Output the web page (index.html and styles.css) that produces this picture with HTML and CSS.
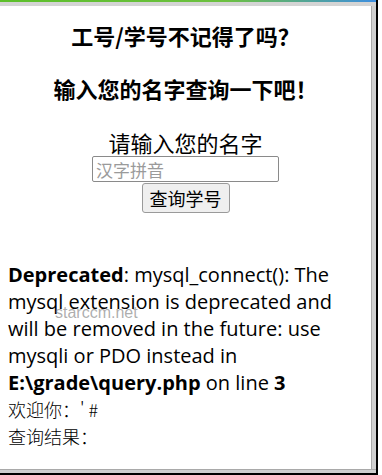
FILE: index.html
```html
<!DOCTYPE html>
<html lang="zh-CN">
<head>
    <meta charset="UTF-8">
    <title>查询学号</title>
    <link rel="stylesheet" href="styles.css">
</head>
<body>
    <div class="window">
        <div class="topbar"></div>
        <div class="toolbar"></div>
        <div class="view">
            <div class="page">
                <h3 class="title first">工号/学号不记得了吗？</h3>
                <h3 class="title">输入您的名字查询一下吧！</h3>
                <form class="query-form">
                    <div class="label">请输入您的名字</div>
                    <input type="text" name="name" placeholder="汉字拼音">
                    <button type="submit">查询学号</button>
                </form>
                <div class="result">
                    <b>Deprecated</b>: mysql_connect(): The mysql extension is deprecated and will be removed in the future: use mysqli or PDO instead in <b>E:\grade\query.php</b> on line <b>3</b><br>
                    <span class="cn">欢迎你：' #</span><br>
                    <span class="cn">查询结果：</span>
                </div>
                <span class="watermark">starccm.net</span>
            </div>
            <div class="scroll"></div>
        </div>
        <div class="status"></div>
    </div>
</body>
</html>
```

FILE: styles.css
```css
* {
    margin: 0;
    padding: 0;
    box-sizing: border-box;
}
body {
    background: #fff;
    font-family: "Open Sans", "Noto Sans CJK SC", sans-serif;
}
.window {
    width: 378px;
    height: 475px;
    display: flex;
    flex-direction: column;
    border-right: 2px solid #000;
}
.topbar {
    height: 2px;
    background: linear-gradient(90deg, #5cbf2a, #6cc040 60%, #3d8ee0);
}
.toolbar {
    height: 4px;
    background: #d4d4d4;
}
.view {
    flex: 1;
    display: flex;
}
.page {
    flex: 1;
    position: relative;
    padding: 0 8px;
    background: #fff;
    color: #000;
}
.scroll {
    width: 5px;
    background: #cfcfcf;
    border-left: 1px solid #a9a9a9;
}
.status {
    height: 6px;
    background: #cfcfcf;
    border-top: 1px solid #a9a9a9;
    border-bottom: 2px solid #000;
}
.title {
    font-family: "Noto Sans CJK SC", sans-serif;
    font-size: 22px;
    font-weight: bold;
    line-height: 30px;
    text-align: center;
    margin-top: 23px;
}
.title.first {
    margin-top: 14px;
}
.query-form {
    display: flex;
    flex-direction: column;
    align-items: center;
    margin-top: 25px;
}
.query-form .label {
    font-family: "Noto Sans CJK SC", sans-serif;
    font-size: 22px;
    line-height: 28px;
}
.query-form input {
    width: 187px;
    height: 26px;
    border: 1px solid #8a8a8a;
    border-radius: 2px;
    padding: 0 3px;
    font-family: "Noto Sans CJK SC", sans-serif;
    font-size: 17px;
}
.query-form input::placeholder {
    color: #9a9a9a;
}
.query-form button {
    width: 88px;
    height: 30px;
    margin-top: 1px;
    background: #efefef;
    border: 1px solid #9a9a9a;
    border-radius: 3px;
    font-family: "Noto Sans CJK SC", sans-serif;
    font-size: 18px;
    color: #000;
}
.result {
    margin-top: 48px;
    font-size: 20px;
    line-height: 27px;
}
.result .cn {
    font-family: "Noto Sans CJK SC", sans-serif;
    font-size: 18px;
    font-weight: 300;
}
.watermark {
    position: absolute;
    left: 55px;
    top: 298px;
    font-family: "Liberation Sans", sans-serif;
    font-size: 16px;
    color: rgba(120, 120, 120, 0.6);
}
```
